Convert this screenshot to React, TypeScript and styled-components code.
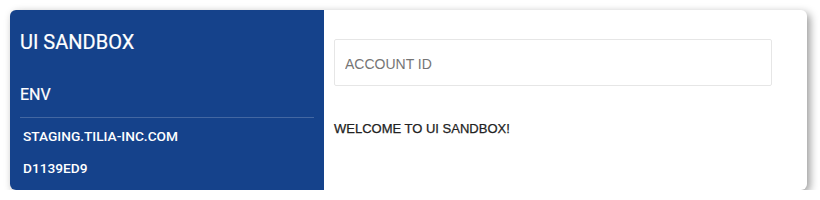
import styled, { createGlobalStyle } from "styled-components";

const GlobalStyle = createGlobalStyle`
  body {
    margin: 0;
    padding: 10px 0 0 10px;
    background: #ffffff;
    font-family: Roboto, "Liberation Sans", sans-serif;
  }
`;

const Card = styled.div`
  display: flex;
  width: 797px;
  height: 180px;
  border-radius: 6px;
  overflow: hidden;
  background: #ffffff;
  box-shadow: 3px 3px 8px rgba(0, 0, 0, 0.4);
`;

const Sidebar = styled.div`
  width: 314px;
  background: #15428b;
  color: #ffffff;
  padding: 0 10px;
  box-sizing: border-box;
  display: flex;
  flex-direction: column;
`;

const Title = styled.h1`
  margin: 20px 0 0;
  font-size: 20px;
  font-weight: 400;
  line-height: 24px;
  -webkit-text-stroke: 0.2px #ffffff;
`;

const EnvLabel = styled.h2`
  margin: 31px 0 0;
  font-size: 16px;
  font-weight: 400;
  line-height: 20px;
  padding-bottom: 12px;
  border-bottom: 1px solid rgba(255, 255, 255, 0.2);
  -webkit-text-stroke: 0.2px #ffffff;
`;

const InfoRow = styled.div<{ $top: number }>`
  padding: 0 3px;
  margin-top: ${(p) => p.$top}px;
  font-size: 13.7px;
  font-weight: 500;
  line-height: 16px;
`;

const Main = styled.div`
  flex: 1;
  padding: 29px 35px 0 10px;
  font-family: "Liberation Sans", Arial, sans-serif;
`;

const AccountInput = styled.input`
  display: block;
  width: 100%;
  height: 47px;
  box-sizing: border-box;
  border: 1px solid #e6e6e6;
  border-radius: 2px;
  padding: 3px 10px 0;
  font-family: "Liberation Sans", Arial, sans-serif;
  font-size: 14px;
  color: #333;
  outline: none;
  &::placeholder {
    color: #757575;
  }
`;

const Welcome = styled.p`
  margin: 35px 0 0;
  font-size: 13px;
  font-weight: 400;
  color: #222222;
  line-height: 16px;
  -webkit-text-stroke: 0.25px #222222;
`;

const App = () => {
  return (
    <>
      <GlobalStyle />
      <Card>
        <Sidebar>
          <Title>UI SANDBOX</Title>
          <EnvLabel>ENV</EnvLabel>
          <InfoRow $top={10}>STAGING.TILIA-INC.COM</InfoRow>
          <InfoRow $top={16}>D1139ED9</InfoRow>
        </Sidebar>
        <Main>
          <AccountInput type="text" placeholder="ACCOUNT ID" />
          <Welcome>WELCOME TO UI SANDBOX!</Welcome>
        </Main>
      </Card>
    </>
  );
};

export default App;
